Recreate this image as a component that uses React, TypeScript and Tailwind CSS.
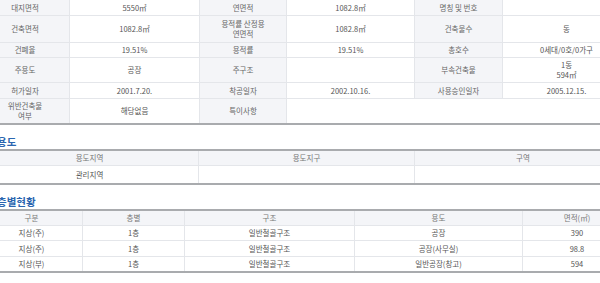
const font = { fontFamily: '"Noto Sans CJK KR", "Noto Sans", sans-serif' };

type Cell = string[];

const infoRows: { h: string; cells: Cell[] }[] = [
  { h: 'h-[16px]', cells: [['대지면적'], ['5550㎡'], ['연면적'], ['1082.8㎡'], ['명칭 및 번호'], ['']] },
  { h: 'h-[27px]', cells: [['건축면적'], ['1082.8㎡'], ['용적률 산정용', '연면적'], ['1082.8㎡'], ['건축물수'], ['동']] },
  { h: 'h-[15px]', cells: [['건폐율'], ['19.51%'], ['용적률'], ['19.51%'], ['총호수'], ['0세대/0호/0가구']] },
  { h: 'h-[25px]', cells: [['주용도'], ['공장'], ['주구조'], [''], ['부속건축물'], ['1동', '594㎡']] },
  { h: 'h-[16px]', cells: [['허가일자'], ['2001.7.20.'], ['착공일자'], ['2002.10.16.'], ['사용승인일자'], ['2005.12.15.']] },
];

const floors = [
  ['지상(주)', '1층', '일반철골구조', '공장', '390'],
  ['지상(주)', '1층', '일반철골구조', '공장(사무실)', '98.8'],
  ['지상(부)', '1층', '일반철골구조', '일반공장(창고)', '594'],
];
const floorH = ['h-[15px]', 'h-[16px]', 'h-[14px]'];

function Heading({ children }: { children: string }) {
  return (
    <div className="pt-[12px] pb-[2px]">
      <h3 className="pl-[16px] text-[10.5px] font-bold leading-[10px] text-[#2b66b0]">{children}</h3>
    </div>
  );
}

const cellBase = 'flex flex-col items-center justify-center leading-[10px] text-center border-r border-[#e4e6ea]';
const labelCls = 'bg-[#f4f5f8] text-[#666]';

export default function App() {
  return (
    <div className="w-[600px] h-[283px] overflow-hidden bg-white text-[7.5px] text-[#555]" style={font}>
      <div className="-ml-[19px] w-[650px]">
        {/* 건축물 정보 */}
        <div className="border-b-2 border-[#a9abae]">
          {infoRows.map((row, i) => (
            <div
              key={i}
              className={`grid grid-cols-[89px_130px_87px_128px_88px_128px] ${row.h} border-b border-[#e4e6ea]`}
            >
              {row.cells.map((c, j) => (
                <div key={j} className={`${cellBase} ${j % 2 === 0 ? labelCls : 'bg-white'}`}>
                  {c.map((t, k) => (
                    <span key={k}>{t}</span>
                  ))}
                </div>
              ))}
            </div>
          ))}
          <div className="grid grid-cols-[89px_130px_87px_344px] h-[24px]">
            <div className={`${cellBase} ${labelCls}`}>
              <span>위반건축물</span>
              <span>여부</span>
            </div>
            <div className={cellBase}>해당없음</div>
            <div className={`${cellBase} ${labelCls}`}>특이사항</div>
            <div className="bg-white"></div>
          </div>
        </div>

        {/* 용도 */}
        <Heading>용도</Heading>
        <div className="border-y-2 border-[#a9abae]">
          <div className="grid grid-cols-[218px_216px_216px] h-[15px] bg-[#f4f5f8] text-[#777] border-b border-[#e4e6ea]">
            <div className="flex items-center justify-center border-r border-[#e4e6ea]">용도지역</div>
            <div className="flex items-center justify-center border-r border-[#e4e6ea]">용도지구</div>
            <div className="flex items-center justify-center">구역</div>
          </div>
          <div className="grid grid-cols-[218px_216px_216px] h-[17px]">
            <div className="flex items-center justify-center border-r border-[#e4e6ea]">관리지역</div>
            <div className="flex items-center justify-center border-r border-[#e4e6ea]"></div>
            <div className="flex items-center justify-center"></div>
          </div>
        </div>

        {/* 층별현황 */}
        <Heading>층별현황</Heading>
        <div className="border-y-2 border-[#a9abae]">
          <div className="grid grid-cols-[102px_102px_170px_168px_108px] h-[15px] bg-[#f4f5f8] text-[#777] border-b border-[#e4e6ea]">
            {['구분', '층별', '구조', '용도', '면적(㎡)'].map((t, j) => (
              <div key={j} className={`flex items-center justify-center ${j < 4 ? 'border-r border-[#e4e6ea]' : ''}`}>
                {t}
              </div>
            ))}
          </div>
          {floors.map((r, i) => (
            <div
              key={i}
              className={`grid grid-cols-[102px_102px_170px_168px_108px] ${floorH[i]} ${i < floors.length - 1 ? 'border-b border-[#e4e6ea]' : ''}`}
            >
              {r.map((t, j) => (
                <div key={j} className={`flex items-center justify-center ${j < 4 ? 'border-r border-[#e4e6ea]' : ''}`}>
                  {t}
                </div>
              ))}
            </div>
          ))}
        </div>
      </div>
    </div>
  );
}
